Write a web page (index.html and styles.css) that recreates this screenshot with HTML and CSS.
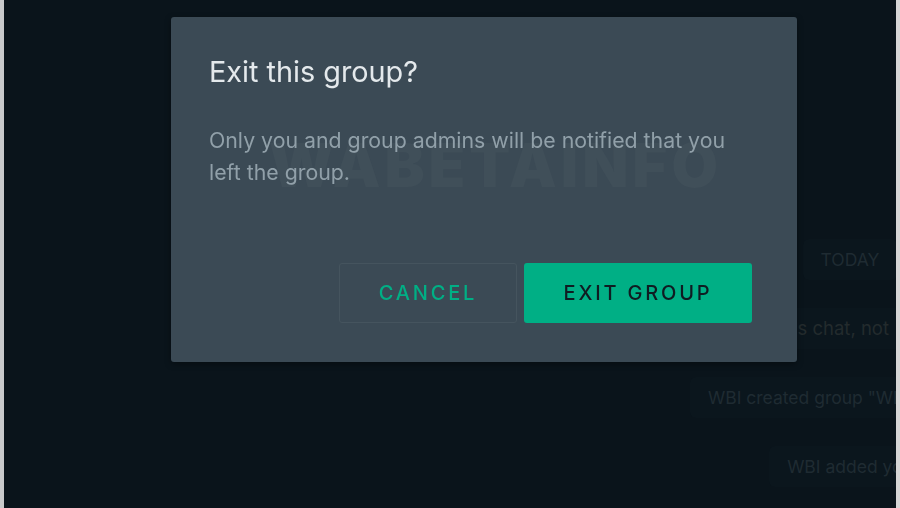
FILE: index.html
```html
<!DOCTYPE html>
<html lang="en">
  <head>
    <meta charset="UTF-8" />
    <meta name="viewport" content="width=device-width, initial-scale=1.0" />
    <title>Exit group</title>
    <link rel="stylesheet" href="styles.css">
  </head>
  <body>
    <div class="app">
      <div class="side"></div>
      <section class="chat">
        <div class="pill day">TODAY</div>
        <div class="pill notice">Messages are end-to-end encrypted. No one outside of this chat, not</div>
        <div class="pill system">WBI created group "WBI Testings"</div>
        <div class="pill system">WBI added you</div>
      </section>
    </div>

    <div class="overlay">
      <div class="dialog" role="dialog" aria-labelledby="dialog-title">
        <h2 id="dialog-title" class="dialog-title">Exit this group?</h2>
        <p class="dialog-text">Only you and group admins will be notified that you left the group.</p>
        <span class="watermark" aria-hidden="true">WABETAINFO</span>
        <div class="dialog-actions">
          <button class="btn btn-outline">CANCEL</button>
          <button class="btn btn-primary">EXIT GROUP</button>
        </div>
      </div>
    </div>
  </body>
</html>
```

FILE: styles.css
```css
*,
*::before,
*::after {
  box-sizing: border-box;
}
:root {
  --clr-page: #0a141b;
  --clr-dialog: #3b4a55;
  --clr-title: #e4e9ec;
  --clr-text: #91a0a9;
  --clr-green: #00af85;
  --clr-faint: #1f2b32;
  --ff-base: "Inter", "Roboto", "Liberation Sans", sans-serif;
}
body {
  margin: 0;
  height: 100vh;
  overflow: hidden;
  font-family: var(--ff-base);
  background-color: var(--clr-page);
  border-left: 4px solid #c9cacb;
  border-right: 4px solid #d6d6d6;
}
.app {
  display: flex;
  height: 100%;
  overflow: hidden;
}
.side {
  flex: 0 0 596px;
}
.chat {
  flex: 0 0 500px;
  min-width: 0;
  display: flex;
  flex-direction: column;
  align-items: center;
  padding-top: 239px;
}
.pill {
  font-size: 17.5px;
  line-height: 21px;
  color: var(--clr-faint);
  background-color: #0b161d;
  border-radius: 6px;
  padding: 10px 18px;
  white-space: nowrap;
}
.day {
  margin-bottom: 28px;
}
.notice {
  align-self: flex-end;
  margin-right: 193px;
  margin-bottom: 28px;
  font-size: 18.5px;
  color: #232b2d;
}
.system {
  margin-bottom: 28px;
}

.overlay {
  position: fixed;
  inset: 0;
  padding: 17px 0 0 171px;
}
.dialog {
  position: relative;
  width: 626px;
  height: 345px;
  padding: 36px 45px 39px 38px;
  display: flex;
  flex-direction: column;
  background-color: var(--clr-dialog);
  border-radius: 3px;
  box-shadow: 0 2px 6px rgb(0 0 0 / 0.35);
}
.dialog-title {
  margin: 0;
  font-size: 28.8px;
  font-weight: 400;
  line-height: 38px;
  color: var(--clr-title);
}
.dialog-text {
  position: relative;
  z-index: 1;
  margin: 33px 0 0;
  font-size: 21.3px;
  line-height: 32px;
  color: var(--clr-text);
}
.watermark {
  position: absolute;
  left: 98px;
  top: 112px;
  font-size: 60px;
  font-weight: 900;
  letter-spacing: 4px;
  color: #404f59;
}
.dialog-actions {
  margin-top: auto;
  display: flex;
  justify-content: flex-end;
  gap: 7px;
}
.btn {
  height: 60px;
  border-radius: 3px;
  font-family: var(--ff-base);
  font-size: 20px;
  font-weight: 500;
  letter-spacing: 2.8px;
  cursor: pointer;
}
.btn-outline {
  width: 178px;
  color: var(--clr-green);
  background-color: transparent;
  border: 1px solid #45545e;
}
.btn-primary {
  width: 228px;
  color: #0f1c22;
  background-color: var(--clr-green);
  border: 0;
}
```
